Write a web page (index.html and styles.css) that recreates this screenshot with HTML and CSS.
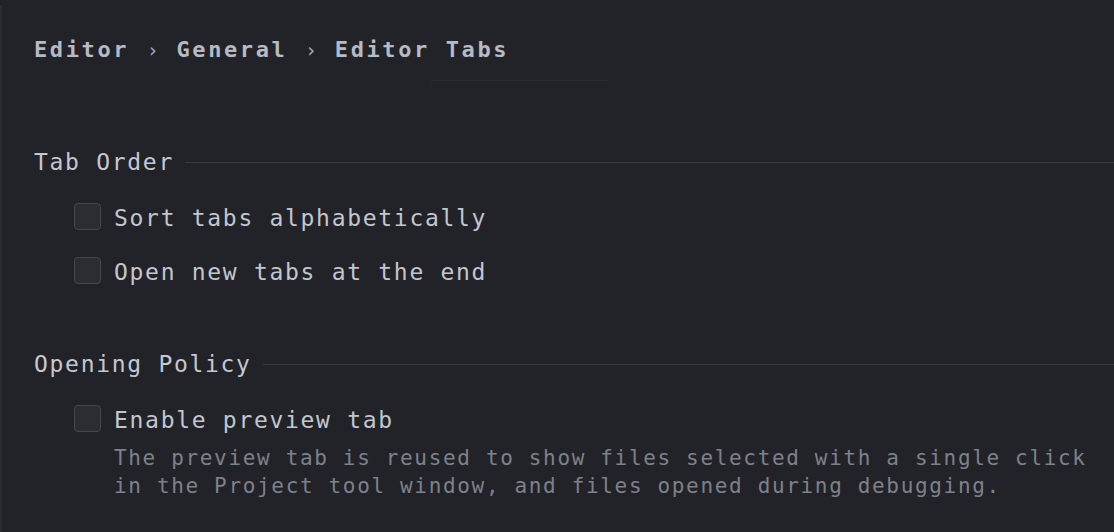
FILE: index.html
```html
<!DOCTYPE html>
<html lang="en">
<head>
<meta charset="utf-8">
<title>Editor Tabs</title>
<link rel="stylesheet" href="styles.css">
</head>
<body>
<div class="frame">
  <main class="page">
    <nav class="crumbs">
      <span>Editor</span><span class="sep">›</span><span>General</span><span class="sep">›</span><span>Editor Tabs</span>
    </nav>
    <div class="crumb-shadow"></div>

    <section class="group first">
      <div class="group-title"><span>Tab Order</span><div class="rule"></div></div>
      <label class="check-row"><span class="box"></span><span class="label">Sort tabs alphabetically</span></label>
      <label class="check-row"><span class="box"></span><span class="label">Open new tabs at the end</span></label>
    </section>

    <section class="group second">
      <div class="group-title"><span>Opening Policy</span><div class="rule"></div></div>
      <label class="check-row"><span class="box"></span><span class="label">Enable preview tab</span></label>
      <p class="hint">The preview tab is reused to show files selected with a single click<br>in the Project tool window, and files opened during debugging.</p>
    </section>
  </main>
</div>
</body>
</html>
```

FILE: styles.css
```css
html, body {
  margin: 0;
  padding: 0;
  background: #212328;
  height: 100%;
  overflow: hidden;
}

.frame {
  height: 100%;
  box-sizing: border-box;
  padding-top: 5px;
}

.page {
  height: 100%;
  box-sizing: border-box;
  border-left: 2px solid #2b2d34;
  padding: 30px 0 0 32px;
  font-family: "DejaVu Sans Mono", "Liberation Mono", monospace;
  color: #c3c6cd;
}

.crumbs {
  display: flex;
  height: 30px;
  line-height: 30px;
  font-size: 22px;
  font-weight: bold;
  letter-spacing: 2.6px;
  color: #b6bac4;
  white-space: pre;
}

.crumbs .sep {
  font-weight: normal;
  font-size: 19px;
  width: 47.4px;
  text-align: center;
  letter-spacing: 0;
  color: #a3a7b1;
}

.crumb-shadow {
  margin: 15px 0 0 397px;
  width: 177px;
  height: 1px;
  background: #2a2c32;
}

.group.first {
  margin-top: 54px;
}

.group.second {
  margin-top: 40px;
}

.group-title {
  display: flex;
  align-items: center;
  height: 54px;
  font-size: 23px;
  letter-spacing: 1.7px;
  color: #c5c8cf;
  white-space: pre;
}

.group-title .rule {
  flex: 1;
  height: 1px;
  margin-left: 11px;
  background: #393b41;
}

.check-row {
  display: flex;
  align-items: center;
  height: 54px;
  padding-left: 40px;
}

.box {
  width: 25px;
  height: 25px;
  border: 1px solid #45474d;
  border-radius: 4px;
  background: #2b2d33;
  flex: none;
}

.label {
  margin-left: 13px;
  padding-top: 3px;
  font-size: 23px;
  letter-spacing: 1.7px;
  color: #c3c6cd;
  white-space: pre;
}

.hint {
  margin: -1px 0 0 80px;
  font-size: 21px;
  line-height: 28px;
  letter-spacing: 1.66px;
  color: #7e818a;
  white-space: pre;
}
```
